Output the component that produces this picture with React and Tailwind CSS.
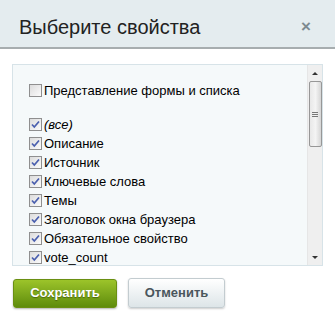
const ITEMS = [
  { label: "(все)", italic: true },
  { label: "Описание" },
  { label: "Источник" },
  { label: "Ключевые слова" },
  { label: "Темы" },
  { label: "Заголовок окна браузера" },
  { label: "Обязательное свойство" },
  { label: "vote_count" },
]

function Box({ checked }) {
  return (
    <span className="relative inline-flex h-[13px] w-[13px] shrink-0 items-center justify-center border border-[#8f8f8f] bg-gradient-to-br from-[#dcdcdc] to-[#fbfbfb]">
      {checked && (
        <svg viewBox="0 0 11 11" className="h-[11px] w-[11px]">
          <path d="M2 5.5 L4.3 8 L9 2.5" fill="none" stroke="#4a5fae" strokeWidth="1.7" />
        </svg>
      )}
    </span>
  )
}

function Scrollbar() {
  return (
    <div className="flex w-[15px] shrink-0 flex-col items-center border-l border-[#e6e6e6] bg-[#efefef]">
      <div className="flex h-[16px] w-full items-center justify-center">
        <span className="h-0 w-0 border-x-[3px] border-b-[3px] border-x-transparent border-b-[#333]" />
      </div>
      <div className="flex h-[66px] w-[13px] items-center justify-center rounded-[2px] border border-[#979797] bg-gradient-to-r from-[#e8e8e8] via-[#f4f4f4] to-[#d6d6d6]">
        <div className="flex flex-col gap-[1px]">
          <span className="h-px w-[6px] bg-[#777]" />
          <span className="h-px w-[6px] bg-[#777]" />
          <span className="h-px w-[6px] bg-[#777]" />
        </div>
      </div>
      <div className="flex-1" />
      <div className="flex h-[16px] w-full items-center justify-center">
        <span className="h-0 w-0 border-x-[3px] border-t-[3px] border-x-transparent border-t-[#333]" />
      </div>
    </div>
  )
}

export default function App() {
  return (
    <div className="h-[322px] w-[335px] overflow-hidden bg-white font-['Liberation_Sans',Arial,sans-serif]">
      <div className="flex h-[49px] items-center justify-between border-b-2 border-[#a7adaf] bg-[#e4ecef] pl-[19px] pr-[24px] pt-[6px]">
        <span className="text-[20px] leading-none text-[#222]">Выберите свойства</span>
        <span className="text-[17px] font-bold leading-none text-[#7d8a90]">×</span>
      </div>

      <div className="ml-[12px] mt-[15px] flex h-[202px] w-[311px] border border-[#d7e3e8] bg-[#f5f9fa]">
        <div className="flex-1 overflow-hidden pl-[16px] pt-[16px] text-[13px] leading-[19px] text-black">
          <label className="flex items-center gap-[2px]">
            <Box />
            <span>Представление формы и списка</span>
          </label>
          <div className="mt-[15px]">
            {ITEMS.map((it) => (
              <label key={it.label} className="flex items-center gap-[2px]">
                <Box checked />
                <span className={it.italic ? "italic" : ""}>{it.label}</span>
              </label>
            ))}
          </div>
        </div>
        <Scrollbar />
      </div>

      <div className="ml-[13px] mt-[12px] flex items-center gap-[11px]">
        <button className="h-[29px] w-[104px] rounded-[3px] border border-[#6a8f12] bg-gradient-to-b from-[#9cc42a] to-[#5f8c0b] text-[13px] font-bold text-white shadow-[0_1px_2px_rgba(0,0,0,0.3)] [text-shadow:0_1px_1px_rgba(0,0,0,0.35)]">
          Сохранить
        </button>
        <button className="h-[30px] w-[97px] rounded-[3px] border border-[#c3ccd0] bg-gradient-to-b from-[#ffffff] to-[#dde5e8] text-[13px] font-bold text-[#4a565c] shadow-[0_1px_2px_rgba(0,0,0,0.2)]">
          Отменить
        </button>
      </div>
    </div>
  )
}
